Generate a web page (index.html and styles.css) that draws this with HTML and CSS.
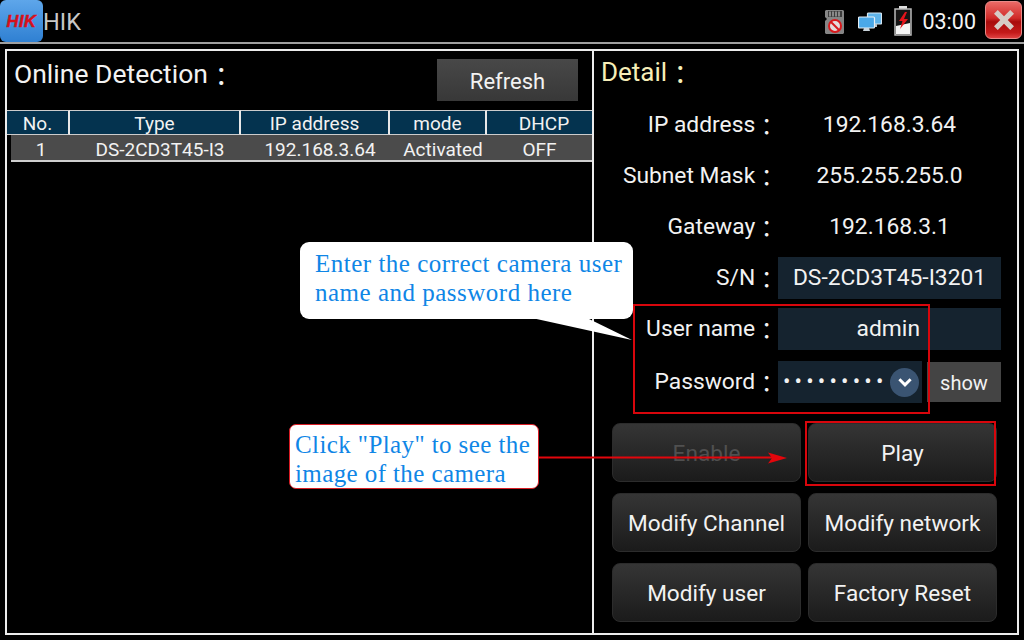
FILE: index.html
```html
<!DOCTYPE html>
<html lang="en">
<head>
<meta charset="utf-8">
<title>HIK</title>
<link rel="stylesheet" href="styles.css">
</head>
<body>
<div class="screen">
  <header class="topbar">
    <div class="brand">
      <div class="logo"><span>HIK</span></div>
      <span class="app-name">HIK</span>
    </div>
    <div class="status">
      <svg class="ic-sd" viewBox="0 0 19 24" width="19" height="24"><path d="M1 0h17l1 1v22l-1 1H1l-1-1V11l2-2-2-2V1z" fill="#858585"/><path d="M3 1h14v6H3z" fill="#3c3c3c"/><path d="M5 1.500v5M8 1.500v5M11 1.500v5M14 1.500v5" stroke="#aaa" stroke-width="1.400"/><circle cx="10" cy="16" r="6" fill="#e4dcdc" stroke="#d8191c" stroke-width="2"/><path d="M6 12l8 8" stroke="#d8191c" stroke-width="2"/></svg>
      <svg class="ic-net" viewBox="0 0 24 20" width="24" height="20"><rect x="9.500" y="1" width="14" height="11" rx="1" fill="#5fb4ea" stroke="#d5e6f2" stroke-width="1.200"/><path d="M14 12h5v3h-5z" fill="#b8c4cc"/><rect x="0.500" y="5" width="16" height="11" rx="1" fill="#4aa8e8" stroke="#e6eff6" stroke-width="1.200"/><path d="M6 16h5l1 3H5z" fill="#c9d3da"/></svg>
      <svg class="ic-bat" viewBox="0 0 18 30" width="18" height="30"><rect x="5" y="0" width="8" height="3" fill="#ddd"/><rect x="1" y="3" width="16" height="26" fill="#151515" stroke="#bbb" stroke-width="1.500"/><path d="M2 20L16 17V28H2z" fill="#f4f4f4"/><path d="M11 6L5 15h3.500L6 23l8-10H10L13 6z" fill="#e3141a"/></svg>
      <span class="clock">03:00</span>
      <div class="close"><svg viewBox="0 0 24 24" width="30" height="30"><path d="M4 7l3-3 5 5 5-5 3 3-5 5 5 5-3 3-5-5-5 5-3-3 5-5z" fill="#d6ccc6"/></svg></div>
    </div>
  </header>
  <main class="panels">
    <section class="left">
      <div class="left-head">
        <h1 class="title">Online Detection<span class="colon">：</span></h1>
        <div class="btn-refresh">Refresh</div>
      </div>
      <div class="table">
        <div class="cell th c1">No.</div>
        <div class="cell th c2">Type</div>
        <div class="cell th c3">IP address</div>
        <div class="cell th c4">mode</div>
        <div class="cell th c5">DHCP</div>
        <div class="row">
          <div class="cell c1">1</div>
          <div class="cell c2">DS-2CD3T45-I3</div>
          <div class="cell c3">192.168.3.64</div>
          <div class="cell c4">Activated</div>
          <div class="cell c5">OFF</div>
        </div>
      </div>
    </section>
    <section class="right">
      <h2 class="detail">Detail<span class="colon">：</span></h2>
      <div class="form">
        <div class="frow"><span class="label">IP address<span class="colon">：</span></span><span class="val">192.168.3.64</span></div>
        <div class="frow"><span class="label">Subnet Mask<span class="colon">：</span></span><span class="val">255.255.255.0</span></div>
        <div class="frow"><span class="label">Gateway<span class="colon">：</span></span><span class="val">192.168.3.1</span></div>
        <div class="frow"><span class="label">S/N<span class="colon">：</span></span><span class="val field">DS-2CD3T45-I3201</span></div>
        <div class="frow"><span class="label">User name<span class="colon">：</span></span><span class="val field user">admin</span></div>
        <div class="frow pw"><span class="label">Password<span class="colon">：</span></span>
          <span class="pwfield"><span class="dots">•••••••••</span>
            <span class="chev"><svg viewBox="0 0 16 16" width="18" height="18"><path d="M3 5.500l5 5 5-5" fill="none" stroke="#fff" stroke-width="2.600"/></svg></span>
          </span>
          <span class="show">show</span>
        </div>
      </div>
      <div class="buttons">
        <div class="btn disabled">Enable</div>
        <div class="btn">Play</div>
        <div class="btn">Modify Channel</div>
        <div class="btn">Modify network</div>
        <div class="btn">Modify user</div>
        <div class="btn">Factory Reset</div>
      </div>
    </section>
  </main>

  <div class="callout bubble">Enter the correct camera user<br>name and password here</div>
  <svg class="tail" viewBox="0 0 100 23" width="100" height="23"><path d="M0 0L100 22 55 0z" fill="#fff"/></svg>
  <div class="redbox box-login"></div>
  <div class="redbox box-play"></div>
  <div class="callout note">Click "Play" to see the<br>image of the camera</div>
  <svg class="arrow" viewBox="0 0 250 16" width="250" height="16"><path d="M0 7.500H235" stroke="#e3060c" stroke-width="2"/><path d="M229 2.500l19 5.500-19 5.500 4-5.500z" fill="#e3060c"/></svg>
</div>
</body>
</html>
```
FILE: styles.css
```css
* { box-sizing: border-box; }
html, body { margin: 0; padding: 0; background: #000; }
.screen {
  position: relative;
  width: 1024px;
  height: 640px;
  overflow: hidden;
  background: #000;
  color: #f2f2f2;
  font-family: Roboto, "Liberation Sans", "Noto Sans CJK JP", sans-serif;
  display: flex;
  flex-direction: column;
}
.colon { vertical-align: -3px; line-height: 0; }
.topbar {
  height: 44px;
  border-bottom: 2px solid #a0a0a0;
  display: flex;
  justify-content: space-between;
}
.brand { display: flex; align-items: flex-start; }
.logo {
  width: 43px;
  height: 42px;
  border-radius: 6px;
  background: linear-gradient(#5ea6ea, #2f80d2);
  display: flex;
  align-items: center;
  justify-content: center;
}
.logo span {
  color: #d8101a;
  font: italic 700 16.500px "Liberation Sans", sans-serif;
  letter-spacing: 0.500px;
  -webkit-text-stroke: 0.500px #d8101a;
}
.app-name { font-size: 23.500px; line-height: 44px; color: #c8c8c8; }
.status { display: flex; align-items: center; padding-right: 2px; }
.ic-sd { margin-right: 14px; margin-top: 2px; }
.ic-net { margin-right: 12px; margin-top: 2px; }
.ic-bat { margin-right: 10px; }
.clock { font-size: 21.500px; margin-right: 9px; color: #f4f4f4; }
.close {
  width: 37px;
  height: 38px;
  border-radius: 6px;
  margin-bottom: 2px;
  border: 1px solid #e88a88;
  background: linear-gradient(#ea6a66 0, #d02a28 45%, #a80c0c 55%, #c41a1a 85%, #e04040 100%);
  display: flex;
  align-items: center;
  justify-content: center;
}
.panels {
  margin: 5px;
  height: 586px;
  width: 1014px;
  border: 2px solid #ececec;
  display: flex;
}
.left {
  width: 587px;
  border-right: 2px solid #ececec;
  flex: none;
}
.left-head {
  height: 59px;
  display: flex;
  justify-content: space-between;
  padding: 8px 14px 0 7px;
}
.title { margin: 0; font-size: 26.500px; font-weight: 400; line-height: 30px; color: #f2f2f2; }
.btn-refresh {
  width: 141px;
  height: 42px;
  background: linear-gradient(#484848, #383838);
  font-size: 22px;
  line-height: 45px;
  text-align: center;
}
.table {
  display: grid;
  grid-template-columns: 63px 171px 149px 97px 105px;
  font-size: 19px;
  text-align: center;
}
.cell { line-height: 29px; }
.th {
  height: 25px;
  line-height: 25px;
  background: #04334f;
  border-top: 1px solid #ccc;
  border-right: 2px solid #e8e8e8;
  border-bottom: 1px solid #ccc;
}
.th.c5 { border-right: 0; padding-left: 9px; }
.row {
  grid-column: 1 / -1;
  display: grid;
  grid-template-columns: 60px 178px 142px 104px 97px;
  margin-left: 4px;
  background: #4b4b4b;
  height: 27px;
  border-bottom: 2px solid #cfcfcf;
}
.row .c5 { padding-right: 8px; }
.right { flex: 1; padding-left: 8px; display: flex; flex-direction: column; }
.detail { margin: 6px 0 0 -1px; font-size: 26px; font-weight: 400; line-height: 30px; color: #f6eeb8; }
.form { margin-top: 17px; }
.frow { display: flex; align-items: center; height: 42px; margin-bottom: 9px; font-size: 22.800px; line-height: 28px; }
.frow.pw { margin-bottom: 0; margin-top: 11px; }
.label { width: 176px; text-align: right; flex: none; white-space: nowrap; }
.val { width: 223px; flex: none; text-align: center; }
.field {
  height: 42px;
  line-height: 42px;
  background: #15232f;
}
.user { text-align: right; padding-right: 81px; }
.pwfield {
  width: 144px;
  height: 42px;
  flex: none;
  background: #15232f;
  display: flex;
  align-items: center;
  justify-content: space-between;
  padding: 0 3px 0 5px;
}
.dots { font-size: 22px; letter-spacing: 4.200px; white-space: nowrap; }
.chev {
  width: 29px;
  height: 29px;
  border-radius: 50%;
  background: #3a5472;
  display: flex;
  align-items: center;
  justify-content: center;
}
.show {
  width: 74px;
  height: 40px;
  margin-left: 5px;
  background: #444;
  font-size: 20px;
  line-height: 42px;
  text-align: center;
}
.buttons {
  display: grid;
  grid-template-columns: 189px 189px;
  grid-auto-rows: 59px;
  column-gap: 7px;
  row-gap: 11px;
  margin-top: 20px;
  margin-left: 10px;
}
.btn {
  border-radius: 8px;
  background: linear-gradient(#353535, #1b1b1b);
  border: 1px solid #2c2c2c;
  font-size: 22.600px;
  text-align: center;
  line-height: 59px;
}
.btn.disabled { color: #505050; }
.callout {
  position: absolute;
  font-family: "Liberation Serif", serif;
  color: #0f86e6;
  background: #fff;
  font-size: 25px;
  line-height: 29px;
  white-space: nowrap;
}
.bubble {
  left: 300px;
  top: 242px;
  width: 333px;
  height: 77px;
  border-radius: 9px;
  padding: 7px 0 0 15px;
  letter-spacing: 0.500px;
}
.tail { position: absolute; left: 532px; top: 318px; }
.note {
  left: 289px;
  top: 424px;
  width: 250px;
  height: 65px;
  border: 1.500px solid #d81c24;
  border-radius: 7px;
  padding: 5px 0 0 5px;
  letter-spacing: 0.400px;
}
.redbox { position: absolute; border: 2px solid #d8060c; }
.box-login { left: 633px; top: 304px; width: 297px; height: 110px; }
.box-play { left: 805px; top: 421px; width: 191px; height: 65px; }
.arrow { position: absolute; left: 539px; top: 450px; }
```
